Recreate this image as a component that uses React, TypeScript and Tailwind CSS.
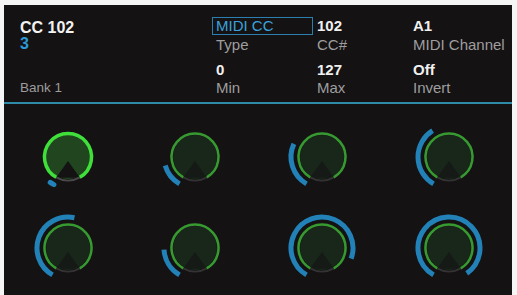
import React from 'react';

type KnobProps = { end: number; start?: number; selected?: boolean };

const CX = 40;
const CY = 40;

// point on a circle, angle in degrees (math convention, y up)
const pt = (r: number, a: number) => {
  const rad = (a * Math.PI) / 180;
  return [CX + r * Math.cos(rad), CY - r * Math.sin(rad)];
};

// clockwise arc from angle a0 down to a1
const arc = (r: number, a0: number, a1: number) => {
  const [x0, y0] = pt(r, a0);
  const [x1, y1] = pt(r, a1);
  const large = a0 - a1 > 180 ? 1 : 0;
  return `M ${x0.toFixed(2)} ${y0.toFixed(2)} A ${r} ${r} 0 ${large} 1 ${x1.toFixed(2)} ${y1.toFixed(2)}`;
};

const Knob: React.FC<KnobProps> = ({ end, start = 240, selected }) => {
  const ring = selected ? '#3fe03a' : '#379a30';
  const disc = selected ? '#21461f' : '#18271a';
  const wedge = selected ? '#151214' : '#161a16';
  const [bx0, by0] = pt(24, 240);
  const [bx1, by1] = pt(24, 300);
  return (
    <svg width="80" height="80" viewBox="0 0 80 80">
      <circle cx={CX} cy={CY} r={22} fill={disc} />
      <polygon points={`${CX},${CY + 4} ${bx0},${by0} ${bx1},${by1}`} fill={wedge} />
      <path d={arc(23.5, 300, 240)} stroke={selected ? '#4a4a4a' : '#333333'} strokeWidth={2} fill="none" />
      <path d={arc(23.5, 240, -60)} stroke={ring} strokeWidth={selected ? 3.5 : 2.5} fill="none" />
      <path
        d={arc(31, start, end)}
        stroke="#2282b8"
        strokeWidth={5}
        fill="none"
        strokeLinecap={selected ? 'round' : 'butt'}
      />
    </svg>
  );
};

const knobs: KnobProps[] = [
  { start: 243, end: 235, selected: true },
  { end: 196 },
  { end: 155 },
  { end: 122 },
  { end: 78 },
  { end: 183 },
  { end: -20 },
  { end: -55 },
];

const Field: React.FC<{ value: string; label: string; boxed?: boolean; first?: boolean }> = ({ value, label, boxed, first }) => (
  <div className={`flex flex-col ${first ? '' : 'mt-[9px]'}`}>
    {boxed ? (
      <div className="h-[18px] border border-[#2a7fae] pl-[3px] text-[15px] leading-[16px] text-[#3aa2dc]">{value}</div>
    ) : (
      <div className={`pl-[4px] text-[15px] font-bold leading-[16px] text-[#f0f0f0] ${first ? 'pt-[1px] h-[18px]' : ''}`}>{value}</div>
    )}
    <div className="mt-[2px] pl-[4px] text-[15px] leading-[16px] text-[#9e9e9e]">{label}</div>
  </div>
);

export default function App() {
  return (
    <div className="h-[295px] w-[517px] bg-[#f5f5f5] pl-[4px] pr-[5px] pt-[5px]" style={{ fontFamily: '"Liberation Sans", Arial, sans-serif' }}>
      <div className="flex h-full flex-col bg-[#151214]">
        {/* header */}
        <div className="flex pb-[6px] pl-[16px] pt-[12px]">
          <div className="flex w-[192px] flex-col">
            <div className="mt-[3px] text-[16px] font-bold leading-[16px] text-[#f2f2f2]">CC 102</div>
            <div className="text-[16px] font-bold leading-[16px] text-[#2b9ad6]">3</div>
            <div className="mt-auto text-[13.5px] leading-[16px] text-[#9c9c9c]">Bank 1</div>
          </div>
          <div className="grid grid-cols-[101px_96px_1fr]">
            <div className="flex flex-col">
              <Field value="MIDI CC" label="Type" boxed first />
              <Field value="0" label="Min" />
            </div>
            <div className="flex flex-col">
              <Field value="102" label="CC#" first />
              <Field value="127" label="Max" />
            </div>
            <div className="flex flex-col">
              <Field value="A1" label="MIDI Channel" first />
              <Field value="Off" label="Invert" />
            </div>
          </div>
        </div>
        <div className="h-[2px] bg-[#2e8aa6]" />
        {/* knobs */}
        <div className="grid grid-cols-4 gap-y-[11px] pt-[13px]">
          {knobs.map((k, i) => (
            <div key={i} className="flex justify-center">
              <Knob {...k} />
            </div>
          ))}
        </div>
      </div>
    </div>
  );
}
